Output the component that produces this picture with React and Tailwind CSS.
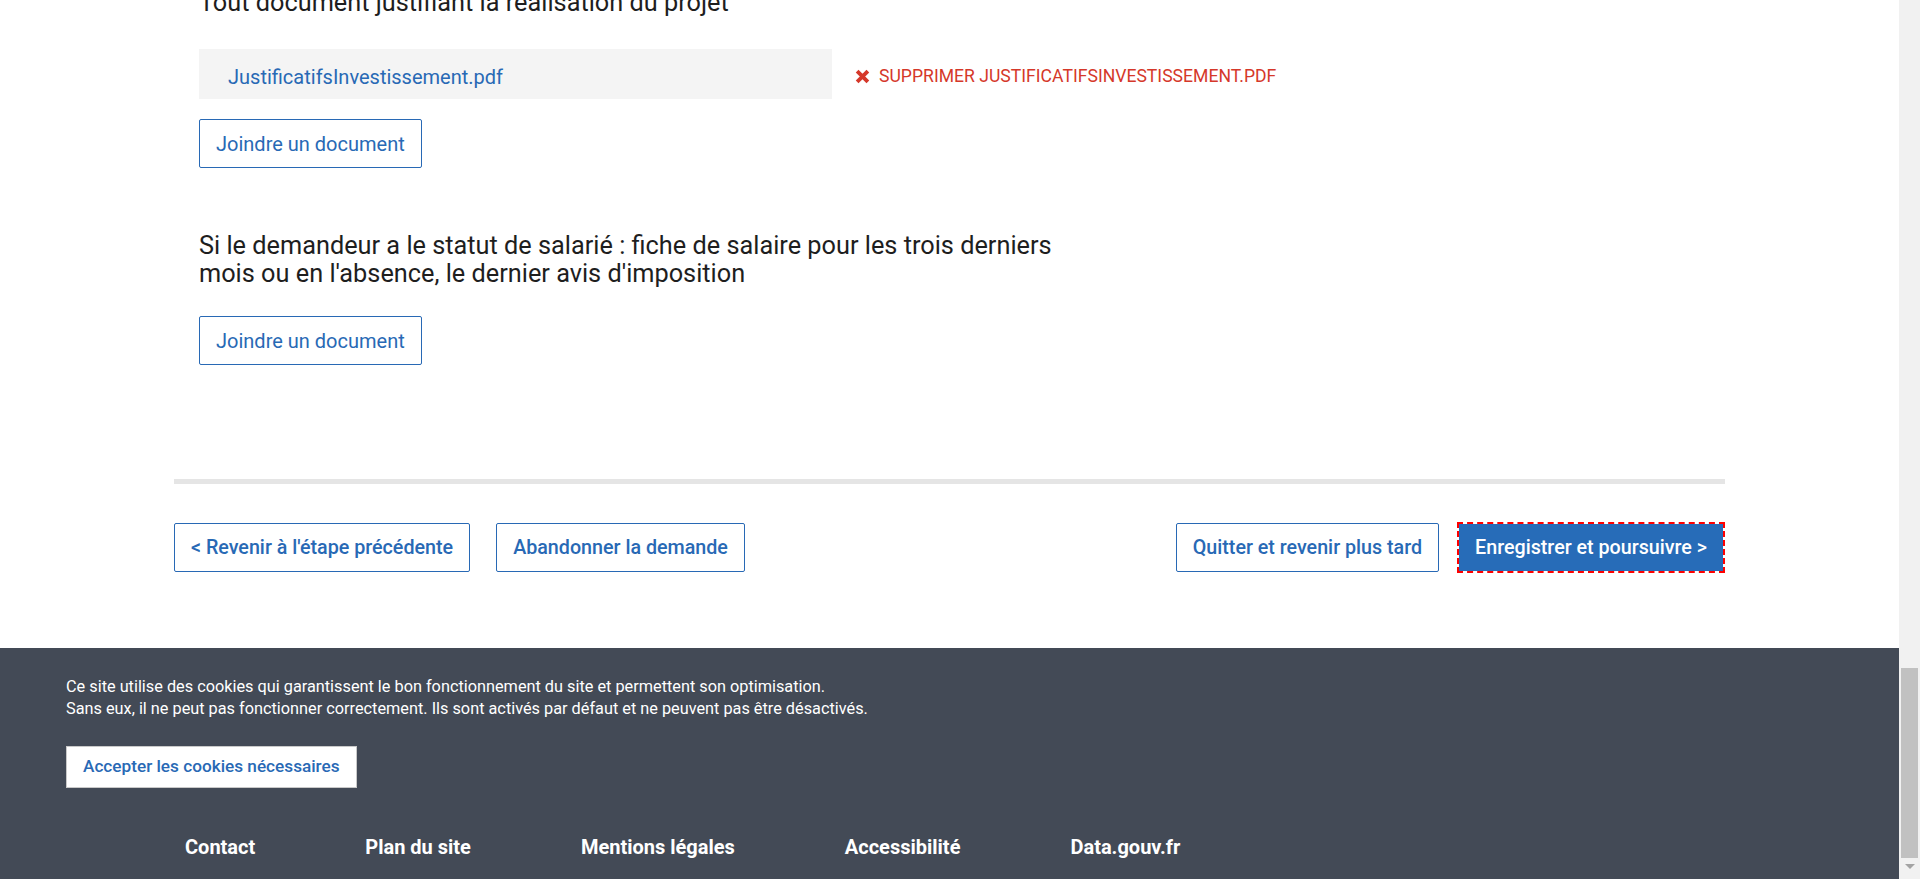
import { useState } from "react";

const BLUE = "text-[#2869b5]";

function CrossIcon() {
  return (
    <svg width="15" height="15" viewBox="0 0 14 14" className="shrink-0">
      <path d="M2 2 L12 12 M12 2 L2 12" stroke="#d5382a" strokeWidth="3.6" strokeLinecap="butt" />
    </svg>
  );
}

function OutlineButton({ children, medium }) {
  return (
    <button
      className={`h-[49px] px-4 border border-[#2869b5] rounded-[2px] bg-white ${BLUE} ${
        medium ? "text-[19.7px] font-medium" : "text-[20px] font-normal"
      }`}
    >
      {children}
    </button>
  );
}

export default function App() {
  const [file, setFile] = useState("JustificatifsInvestissement.pdf");

  return (
    <div className="flex h-[879px] overflow-hidden bg-white font-['Roboto',sans-serif]">
      <div className="flex-1 min-w-0 flex flex-col overflow-hidden">
        <main className="w-[1551px] mx-auto shrink-0">
          <div className="px-[25px]">
            {/* Section partially scrolled out of view */}
            <h2 className="-mt-[11px] text-[25.3px] leading-[28px] text-[#1e1e1e]">
              Tout document justifiant la réalisation du projet
            </h2>

            {file && (
              <div className="mt-[32px] flex items-center">
                <div className={`w-[633px] h-[50px] bg-[#f4f4f4] pl-[29px] pt-[5px] flex items-center text-[20px] ${BLUE}`}>
                  {file}
                </div>
                <button
                  onClick={() => setFile(null)}
                  className="ml-[23px] pt-[5px] flex items-center gap-[9px] text-[17.6px] uppercase text-[#d5382a]"
                >
                  <CrossIcon />
                  Supprimer {file}
                </button>
              </div>
            )}

            <div className="mt-[20px]">
              <OutlineButton>Joindre un document</OutlineButton>
            </div>

            <h2 className="mt-[64px] w-[880px] text-[25.3px] leading-[28px] text-[#1e1e1e]">
              Si le demandeur a le statut de salarié : fiche de salaire pour les trois derniers mois ou en l'absence, le dernier avis d'imposition
            </h2>

            <div className="mt-[28px]">
              <OutlineButton>Joindre un document</OutlineButton>
            </div>
          </div>

          <div className="mt-[114px] h-[5px] bg-[#e5e5e5]" />

          {/* Step navigation */}
          <div className="mt-[39px] flex items-center justify-between">
            <div className="flex gap-[26px]">
              <OutlineButton medium>&lt; Revenir à l'étape précédente</OutlineButton>
              <OutlineButton medium>Abandonner la demande</OutlineButton>
            </div>
            <div className="flex items-center gap-[20px] pr-[2px]">
              <OutlineButton medium>Quitter et revenir plus tard</OutlineButton>
              <button className="h-[47px] px-4 bg-[#276cb8] text-white text-[19.7px] font-medium outline-2 outline-dashed outline-[#ff0000]">
                Enregistrer et poursuivre &gt;
              </button>
            </div>
          </div>
        </main>

        <footer className="mt-[76px] flex-1 bg-[#434a56] px-[66px] pt-[28px] text-white">
          <p className="text-[16.3px] leading-[22px]">
            Ce site utilise des cookies qui garantissent le bon fonctionnement du site et permettent son optimisation.
            <br />
            Sans eux, il ne peut pas fonctionner correctement. Ils sont activés par défaut et ne peuvent pas être désactivés.
          </p>
          <button className={`mt-[26px] h-[42px] px-4 bg-white border border-[#c9c9c9] text-[17.2px] font-medium ${BLUE}`}>
            Accepter les cookies nécessaires
          </button>
          <nav className="mt-[47px] pl-[119px] flex gap-[110px] text-[20px] font-bold leading-[24px]">
            {["Contact", "Plan du site", "Mentions légales", "Accessibilité", "Data.gouv.fr"].map((l) => (
              <a key={l} href="#" className="text-white">
                {l}
              </a>
            ))}
          </nav>
        </footer>
      </div>

      {/* Browser scrollbar */}
      <div className="w-[21px] shrink-0 bg-[#f1f1f1] flex flex-col items-center">
        <div className="h-[668px] shrink-0" />
        <div className="w-[17px] h-[190px] bg-[#c1c1c1]" />
        <div className="mt-[6px] w-0 h-0 border-l-[5px] border-r-[5px] border-t-[5px] border-l-transparent border-r-transparent border-t-[#a3a3a3]" />
      </div>
    </div>
  );
}
